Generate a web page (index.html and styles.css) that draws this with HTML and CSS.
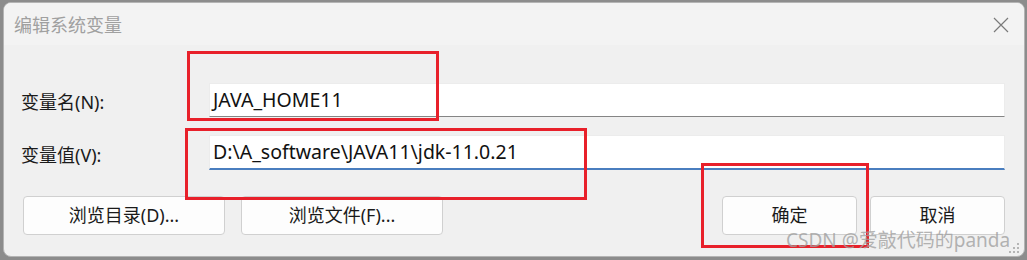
FILE: index.html
```html
<!DOCTYPE html>
<html lang="zh-CN">
<head>
<meta charset="UTF-8" />
<title>编辑系统变量</title>
<link rel="stylesheet" href="styles.css">
</head>
<body>

<div class="window">
  <div class="titlebar">
    <span class="title">编辑系统变量</span>
    <svg class="close" width="16" height="16" viewBox="0 0 16 16">
      <path d="M1 1 L15 15 M15 1 L1 15" stroke="#7a7a7a" stroke-width="1.2" fill="none" />
    </svg>
  </div>

  <div class="content">
    <div class="form">
      <label class="label">变量名(N):</label>
      <div class="field">JAVA_HOME11</div>
      <label class="label">变量值(V):</label>
      <div class="field focused">D:\A_software\JAVA11\jdk-11.0.21</div>
    </div>

    <div class="actions">
      <div class="group">
        <button class="btn wide">浏览目录(D)...</button>
        <button class="btn wide">浏览文件(F)...</button>
      </div>
      <div class="group">
        <button class="btn">确定</button>
        <button class="btn">取消</button>
      </div>
    </div>
  </div>

  <!-- 标注框 -->
  <div class="mark mark-name"></div>
  <div class="mark mark-value"></div>
  <div class="mark mark-ok"></div>

  <div class="watermark">CSDN @爱敲代码的panda</div>
  <svg class="grip" width="12" height="12" viewBox="0 0 12 12">
    <rect x="8" y="0" width="2" height="2" fill="#b5b5b5" />
    <rect x="4" y="4" width="2" height="2" fill="#b5b5b5" />
    <rect x="8" y="4" width="2" height="2" fill="#b5b5b5" />
    <rect x="0" y="8" width="2" height="2" fill="#b5b5b5" />
    <rect x="4" y="8" width="2" height="2" fill="#b5b5b5" />
    <rect x="8" y="8" width="2" height="2" fill="#b5b5b5" />
  </svg>
</div>

</body>
</html>
```

FILE: styles.css
```css
body {
  margin: 0;
  padding: 2px 0 0 3px;
  background: #8c8c8c;
  font-family: "Noto Sans", "Noto Sans CJK SC", sans-serif;
}
.window {
  position: relative;
  width: 1020px;
  height: 253px;
  background: #f0f0f0;
  border: 1px solid #b4b4b4;
  border-radius: 8px;
  overflow: hidden;
}
.titlebar {
  height: 42px;
  background: #f3f3f3;
  display: flex;
  align-items: center;
  justify-content: space-between;
  padding: 0 15px 0 10px;
}
.title {
  font-size: 18px;
  color: #a0a0a0;
  font-family: "Noto Sans CJK SC", sans-serif;
}
.close {
  margin-top: 1px;
}
.content {
  padding: 38px 19px 0 17px;
}
.form {
  display: grid;
  grid-template-columns: 188px 1fr;
  row-gap: 18px;
  align-items: center;
}
.label {
  font-size: 18px;
  color: #1a1a1a;
  padding-top: 2px;
}
.field {
  height: 34px;
  box-sizing: border-box;
  background: #fff;
  border: 1px solid #ececec;
  border-bottom: 1px solid #858585;
  padding: 0 0 0 3px;
  font-size: 19.5px;
  line-height: 32px;
  color: #111;
}
.field.focused {
  height: 35px;
  border-bottom: 2px solid #4a7ebf;
}
.actions {
  display: flex;
  justify-content: space-between;
  margin-top: 26px;
  padding-left: 2px;
}
.group {
  display: flex;
  gap: 13px;
}
.group:first-child {
  gap: 16px;
}
.btn {
  width: 135px;
  height: 39px;
  background: #fdfdfd;
  border: 1px solid #d0d0d0;
  border-radius: 4px;
  font-family: "Noto Sans", "Noto Sans CJK SC", sans-serif;
  font-size: 18px;
  color: #1a1a1a;
  padding: 0 0 3px;
}
.btn.wide {
  width: 202px;
}
.mark {
  position: absolute;
  border: 3px solid #e8202a;
}
.mark-name {
  left: 183px;
  top: 48px;
  width: 246px;
  height: 64px;
}
.mark-value {
  left: 181px;
  top: 125px;
  width: 396px;
  height: 66px;
}
.mark-ok {
  left: 697px;
  top: 160px;
  width: 162px;
  height: 79px;
}
.watermark {
  position: absolute;
  left: 782px;
  top: 222px;
  font-size: 19px;
  color: rgba(160, 160, 160, 0.8);
  font-family: "Noto Sans", "Noto Sans CJK SC", sans-serif;
}
.grip {
  position: absolute;
  right: 3px;
  bottom: 1px;
}
```
